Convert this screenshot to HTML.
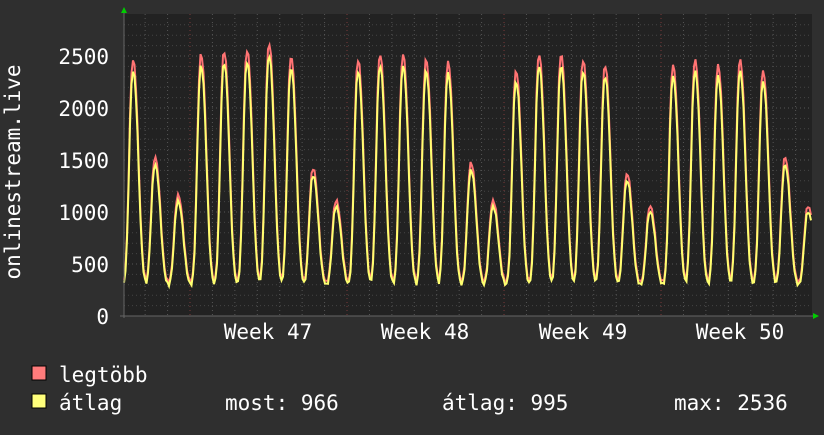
<!DOCTYPE html>
<html><head><meta charset="utf-8"><style>
body{margin:0;background:#2f2f2f;width:824px;height:430px;overflow:hidden}
svg text{font-family:"DejaVu Sans Mono","Liberation Mono",monospace;fill:#fff;font-size:21px}
</style></head><body>
<svg id="s" width="824" height="430" xmlns="http://www.w3.org/2000/svg">
<rect x="0" y="0" width="824" height="430" fill="#2f2f2f"/>
<rect x="124" y="14" width="688" height="302" fill="#222"/>
<g id="grid"></g>
<polyline id="red" fill="none" stroke="#ff7373" stroke-width="2"/>
<polyline id="yel" fill="none" stroke="#ffff70" stroke-width="2"/>
<line x1="120" y1="316" x2="814" y2="316" stroke="#666"/>
<line x1="124" y1="12" x2="124" y2="318" stroke="#666"/>
<polygon points="121,13 127,13 124,7" fill="#0c0"/>
<polygon points="813,313 813,319 819,316" fill="#0c0"/>
<g text-anchor="end">
<text x="109" y="64">2500</text><text x="109" y="168">1500</text><text x="109" y="116">2000</text>
<text x="109" y="220">1000</text><text x="109" y="272">500</text><text x="109" y="324">0</text>
</g>
<text transform="translate(20,172) rotate(-90)" text-anchor="middle">onlinestream.live</text>
<g text-anchor="middle">
<text x="268" y="339">Week 47</text><text x="425" y="339">Week 48</text>
<text x="583" y="339">Week 49</text><text x="740" y="339">Week 50</text>
</g>
<rect x="32" y="366" width="14" height="14" fill="#ff7b7b" stroke="#000"/>
<rect x="32" y="394" width="14" height="14" fill="#ffff7b" stroke="#000"/>
<text x="59" y="382">legtöbb</text>
<text x="59" y="410">átlag</text>
<text x="225" y="410">most: 966</text>
<text x="442" y="410">átlag: 995</text>
<text x="674" y="410">max: 2536</text>
</svg>
<script>
var g=document.getElementById('grid'),h='';
for(var v=100;v<=2800;v+=100){var y=316-v*0.104;if(y<14)break;h+='<line x1="124" x2="812" y1="'+y+'" y2="'+y+'" stroke="'+(v%500?'#444':'#555')+'" stroke-dasharray="1,3"/>';}
for(var x=190-22.43*3;x<812;x+=22.43){if(x<125)continue;var maj=[190,347,504,661].some(function(m){return Math.abs(m-x)<2});h+='<line y1="14" y2="316" x1="'+x+'" x2="'+x+'" stroke="'+(maj?'#7a3a3a':'#555')+'" stroke-dasharray="1,3"/>';}
g.innerHTML=h;
var P=[[133,2350],[155,1450],[178,1100],[201,2400],[224,2430],[247,2440],[269,2500],[291,2380],[313,1350],[336,1050],[358,2350],[380,2400],[403,2400],[426,2350],[448,2330],[471,1400],[493,1050],[516,2250],[539,2400],[561,2400],[583,2350],[605,2300],[627,1300],[650,1000],[673,2300],[695,2350],[718,2300],[740,2350],[763,2250],[785,1450],[808,1000]];
var ry=[],yy=[];
for(var x=124;x<=811;x+=1.5){var v=290,best=0;
P.forEach(function(p){var d=x-p[0],w=d<0?5:7;var b=Math.exp(-Math.pow(Math.abs(d)/w,2.4));if(b*(p[1]-290)>best)best=b*(p[1]-290);});
v+=best;var noise=Math.sin(x*1.7)*15;
yy.push(x.toFixed(1)+','+(316-(v+noise)*0.104).toFixed(1));
ry.push(x.toFixed(1)+','+(316-(v*1.04+noise+15)*0.104).toFixed(1));}
document.getElementById('red').setAttribute('points',ry.join(' '));
document.getElementById('yel').setAttribute('points',yy.join(' '));
</script>
</body></html>
